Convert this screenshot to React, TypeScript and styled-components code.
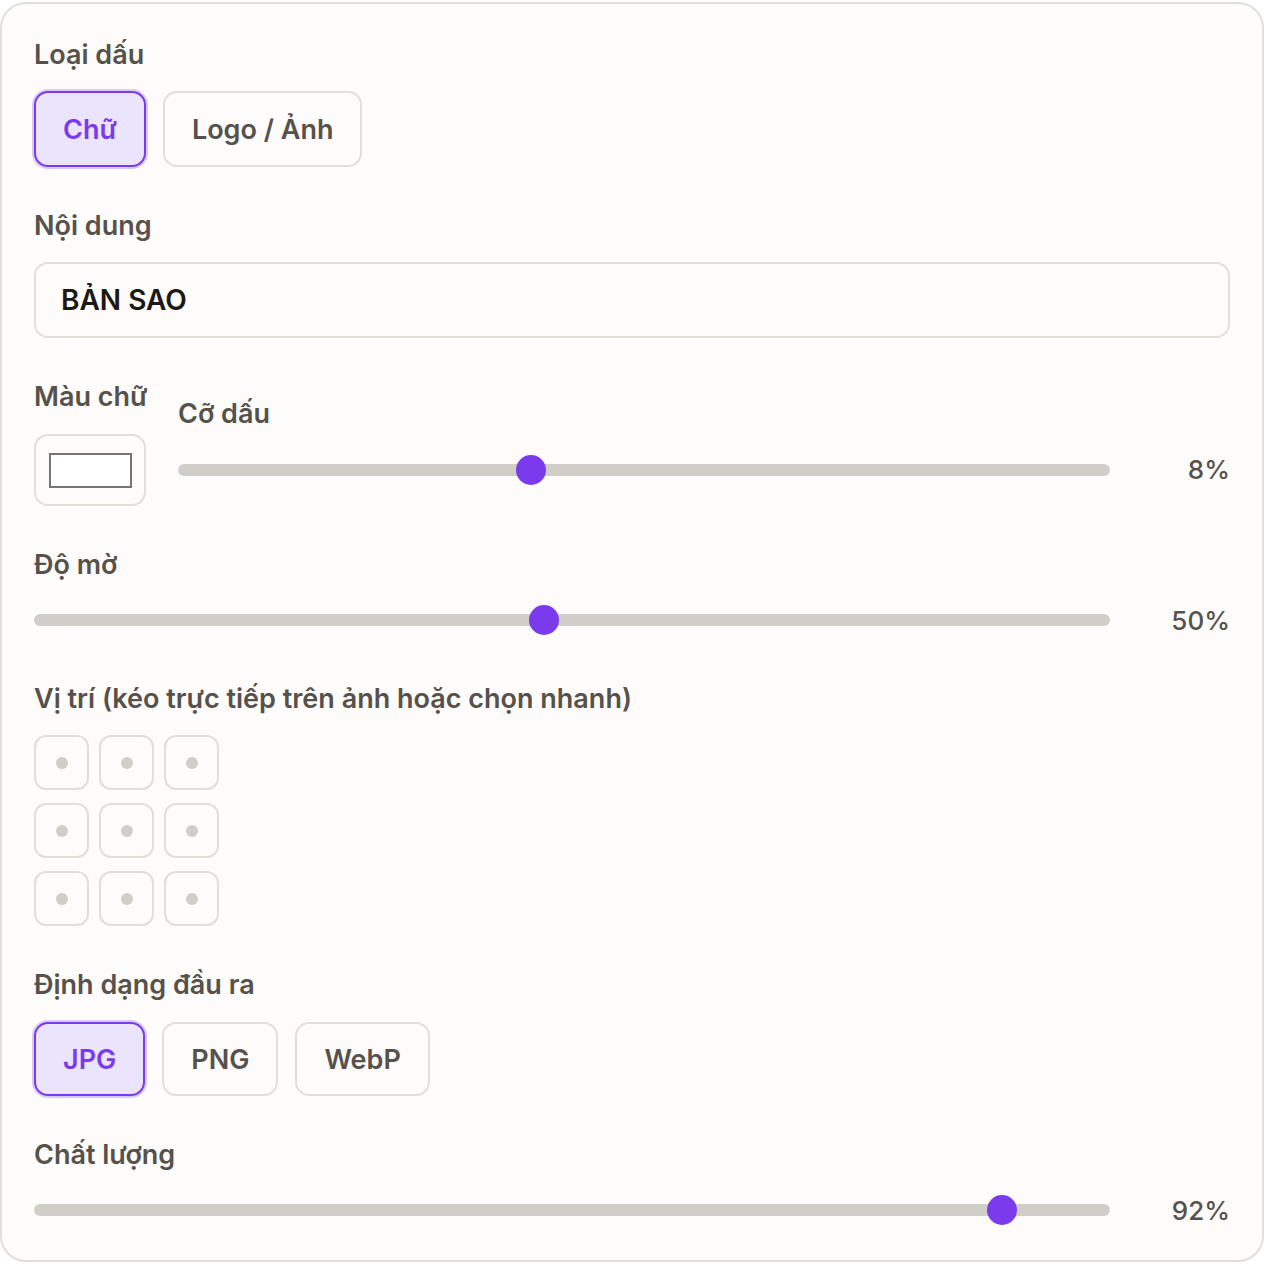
import React from 'react';
import styled, { createGlobalStyle, css } from 'styled-components';

const GlobalStyle = createGlobalStyle`
  html, body {
    margin: 0;
    padding: 0;
    background: #ffffff;
  }
  body {
    font-family: Inter, "Noto Sans", "Liberation Sans", sans-serif;
  }
`;

const Card = styled.div`
  box-sizing: border-box;
  margin: 2px 0;
  width: 1264px;
  height: 1260px;
  border: 2px solid #e2dfdb;
  border-radius: 26px;
  background: #fdfcfb;
  padding: 35px 32px 0 32px;
  display: flex;
  flex-direction: column;
  gap: 43px;
  overflow: hidden;
`;

const Section = styled.div<{ $gap?: number; $width?: number }>`
  display: flex;
  flex-direction: column;
  gap: ${(p) => p.$gap ?? 20}px;
  ${(p) => p.$width && `width: ${p.$width}px; flex-shrink: 0;`}
`;

const Label = styled.div`
  font-size: 27px;
  line-height: 32px;
  font-weight: 600;
  color: #57514b;
  white-space: nowrap;
`;

const ButtonRow = styled.div`
  display: flex;
  gap: 17px;
`;

const Choice = styled.button<{ $active?: boolean; $h?: number }>`
  box-sizing: border-box;
  height: ${(p) => p.$h ?? 76}px;
  padding: 0 27px;
  border-radius: 14px;
  border: 2px solid #e2dfdb;
  background: #fdfcfb;
  font-family: inherit;
  font-size: 27px;
  font-weight: 600;
  color: #57514b;
  cursor: pointer;
  ${(p) =>
    p.$active &&
    css`
      border-color: #7c3aed;
      background: #ebe4fd;
      color: #7c3aed;
      box-shadow: 0 0 0 2px #d9c9fb;
    `}
`;

const TextInput = styled.input`
  box-sizing: border-box;
  width: 100%;
  height: 76px;
  border: 2px solid #e2dfdb;
  border-radius: 14px;
  background: #fdfcfb;
  padding: 0 25px;
  font-family: inherit;
  font-size: 28px;
  font-weight: 600;
  color: #1c1917;
  outline: none;
`;

const SplitRow = styled.div`
  display: flex;
  align-items: center;
  gap: 32px;
`;

const ColorBox = styled.div`
  box-sizing: border-box;
  width: 112px;
  height: 72px;
  border: 2px solid #e2dfdb;
  border-radius: 14px;
  background: #fdfcfb;
  display: flex;
  align-items: center;
  justify-content: center;
`;

const Swatch = styled.div<{ $color: string }>`
  box-sizing: border-box;
  width: 83px;
  height: 35px;
  border: 2px solid #767676;
  background: ${(p) => p.$color};
`;

const Grow = styled.div`
  flex: 1;
  display: flex;
  flex-direction: column;
  gap: 20px;
`;

const SliderRow = styled.div`
  height: 40px;
  display: flex;
  align-items: center;
  gap: 24px;
`;

const Track = styled.div`
  position: relative;
  flex: 1;
  height: 12px;
  border-radius: 6px;
  background: #d1cec9;
`;

const Thumb = styled.div`
  position: absolute;
  top: 50%;
  width: 30px;
  height: 30px;
  border-radius: 50%;
  background: #7c3aed;
  transform: translate(-50%, -50%);
`;

const Value = styled.div`
  width: 96px;
  text-align: right;
  font-size: 26px;
  font-weight: 500;
  color: #57514b;
`;

const PosGrid = styled.div`
  display: grid;
  grid-template-columns: repeat(3, 55px);
  grid-auto-rows: 55px;
  column-gap: 10px;
  row-gap: 13px;
`;

const Cell = styled.div`
  box-sizing: border-box;
  border: 2px solid #e2dfdb;
  border-radius: 12px;
  display: flex;
  align-items: center;
  justify-content: center;
`;

const Dot = styled.span`
  width: 12px;
  height: 12px;
  border-radius: 50%;
  background: #d1cec9;
`;

function Slider({ value, min, max }: { value: number; min: number; max: number }) {
  const pct = (value - min) / (max - min);
  return (
    <SliderRow>
      <Track>
        <Thumb style={{ left: `calc(15px + ${pct} * (100% - 30px))` }} />
      </Track>
      <Value>{value}%</Value>
    </SliderRow>
  );
}

export default function App() {
  return (
    <>
      <GlobalStyle />
      <Card>
        <Section>
          <Label>Loại dấu</Label>
          <ButtonRow>
            <Choice $active>Chữ</Choice>
            <Choice>Logo / Ảnh</Choice>
          </ButtonRow>
        </Section>

        <Section>
          <Label>Nội dung</Label>
          <TextInput defaultValue="BẢN SAO" />
        </Section>

        <SplitRow>
          <Section $gap={21} $width={112}>
            <Label>Màu chữ</Label>
            <ColorBox>
              <Swatch $color="#ffffff" />
            </ColorBox>
          </Section>
          <Grow>
            <Label>Cỡ dấu</Label>
            <Slider value={8} min={2} max={18} />
          </Grow>
        </SplitRow>

        <Section $gap={19}>
          <Label>Độ mờ</Label>
          <Slider value={50} min={5} max={100} />
        </Section>

        <Section>
          <Label>Vị trí (kéo trực tiếp trên ảnh hoặc chọn nhanh)</Label>
          <PosGrid>
            {Array.from({ length: 9 }).map((_, i) => (
              <Cell key={i}>
                <Dot />
              </Cell>
            ))}
          </PosGrid>
        </Section>

        <Section $gap={21}>
          <Label>Định dạng đầu ra</Label>
          <ButtonRow>
            <Choice $active $h={74}>JPG</Choice>
            <Choice $h={74}>PNG</Choice>
            <Choice $h={74}>WebP</Choice>
          </ButtonRow>
        </Section>

        <Section $gap={19}>
          <Label>Chất lượng</Label>
          <Slider value={92} min={10} max={100} />
        </Section>
      </Card>
    </>
  );
}
